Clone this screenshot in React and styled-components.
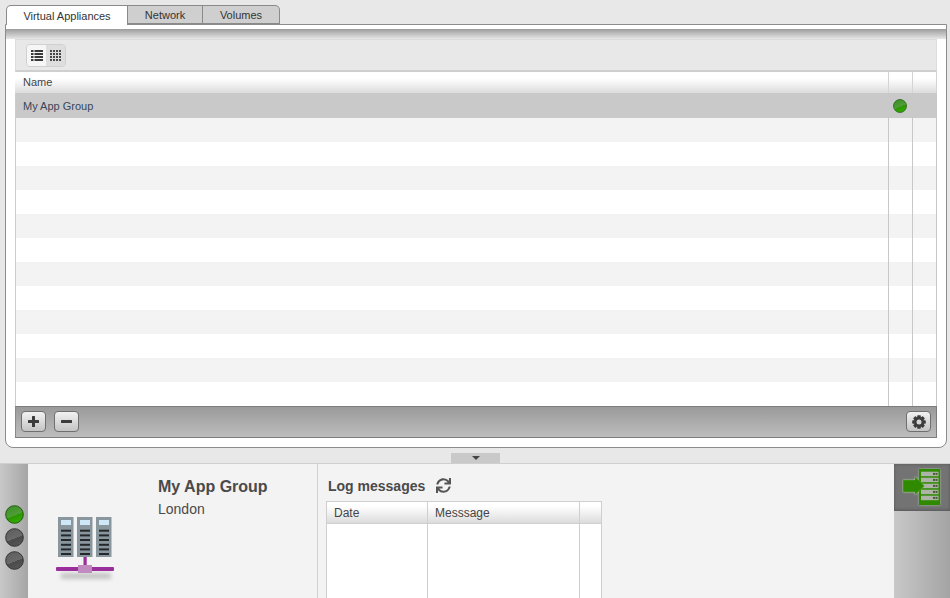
import React from "react";
import styled, { createGlobalStyle } from "styled-components";
import { FaSync } from "react-icons/fa";

const GlobalStyle = createGlobalStyle`
  html, body {
    margin: 0;
    padding: 0;
    height: 598px;
    overflow: hidden;
    background: #e8e8e8;
    font-family: "Liberation Sans", Arial, sans-serif;
  }
`;

const Page = styled.div`
  width: 950px;
  height: 598px;
  display: flex;
  flex-direction: column;
  overflow: hidden;
`;

const TopArea = styled.div`
  height: 448px;
  padding: 5px 3px 0 5px;
  box-sizing: border-box;
  display: flex;
  flex-direction: column;
  flex: none;
`;

const TabBar = styled.div`
  display: flex;
  height: 20px;
  padding-left: 1px;
  position: relative;
  z-index: 1;
  margin-bottom: -1px;
`;

const Tab = styled.div`
  box-sizing: border-box;
  width: ${(p) => p.$w}px;
  height: ${(p) => (p.$active ? 20 : 19)}px;
  display: flex;
  align-items: center;
  justify-content: center;
  font-size: 11px;
  color: #333;
  background: ${(p) => (p.$active ? "#fff" : "#cfcfcf")};
  border: 1px solid #8a8a8a;
  border-left-width: ${(p) => (p.$first ? 1 : 0)}px;
  border-bottom-width: ${(p) => (p.$active ? 0 : 1)}px;
  border-top-left-radius: ${(p) => (p.$first ? 5 : 0)}px;
  border-top-right-radius: ${(p) => (p.$last ? 5 : 0)}px;
`;

const Panel = styled.div`
  flex: 1;
  box-sizing: border-box;
  border: 1px solid #8c8c8c;
  border-radius: 0 0 8px 8px;
  background: linear-gradient(#fff 0, #fff 4px, #9c9c9c 4px, #e6e6e6 14px, #fff 14px);
  padding: 14px 9px 9px 9px;
  display: flex;
  min-height: 0;
`;

const Inner = styled.div`
  flex: 1;
  display: flex;
  flex-direction: column;
  min-width: 0;
`;

const Toolbar = styled.div`
  height: 33px;
  flex: none;
  box-sizing: border-box;
  background: #e8e8e8;
  border: 1px solid #dcdcdc;
  border-bottom: 2px solid #cfcfcf;
  padding: 4px 10px;
  display: flex;
  align-items: flex-start;
`;

const ViewSwitch = styled.div`
  display: flex;
  height: 21px;
  border: 1px solid #d0d0d0;
  border-radius: 4px;
  overflow: hidden;
`;

const ViewButton = styled.div`
  width: 19px;
  display: flex;
  align-items: center;
  justify-content: center;
  background: ${(p) => (p.$on ? "#f6f6f6" : "#dedede")};
`;

const HeaderRow = styled.div`
  display: grid;
  grid-template-columns: 1fr 24px 24px;
  height: 21px;
  flex: none;
  box-sizing: border-box;
  padding-left: 1px;
  background: linear-gradient(#fff 30%, #dcdcdc);
`;

const HeadCell = styled.div`
  font-size: 11px;
  color: #444;
  padding: 0 0 2px 7px;
  display: flex;
  align-items: center;
  box-sizing: border-box;
  border-right: 1px solid #d4d4d4;
`;

const Rows = styled.div`
  flex: 1;
  min-height: 0;
  overflow: hidden;
  background: #fff;
  border-left: 1px solid #cccccc;
`;

const Row = styled.div`
  display: grid;
  grid-template-columns: 1fr 24px 24px;
  height: ${(p) => (p.$selected ? 25 : 24)}px;
  background: ${(p) => (p.$selected ? "#c9c9c9" : p.$odd ? "#f3f3f3" : "#fff")};
`;

const Cell = styled.div`
  font-size: 11px;
  color: #3a4658;
  padding-left: 7px;
  display: flex;
  align-items: center;
  box-sizing: border-box;
  border-right: ${(p) => (p.$line ? "1px solid #c8c8c8" : "none")};
`;

const StatusCell = styled(Cell)`
  padding-left: 4px;
`;

const BottomBar = styled.div`
  height: 32px;
  flex: none;
  box-sizing: border-box;
  border: 1px solid #7d7d7d;
  border-left-color: #8a8a8a;
  background: linear-gradient(#9a9a9a, #bdbdbd);
  padding: 4px 5px 0 5px;
  display: flex;
  gap: 8px;
`;

const BarButton = styled.div`
  box-sizing: border-box;
  width: 25px;
  height: 21px;
  border: 1px solid #6f6f6f;
  border-radius: 4px;
  background: linear-gradient(#f2f2f2, #c4c4c4);
  display: flex;
  align-items: center;
  justify-content: center;
  margin-left: ${(p) => (p.$right ? "auto" : 0)};
`;

const Splitter = styled.div`
  height: 15px;
  flex: none;
  display: flex;
  justify-content: center;
  align-items: flex-end;
`;

const Handle = styled.div`
  width: 49px;
  height: 10px;
  background: #c9c9c9;
  display: flex;
  align-items: center;
  justify-content: center;
  margin-left: 1px;
`;

const Arrow = styled.div`
  width: 0;
  height: 0;
  border-left: 4px solid transparent;
  border-right: 4px solid transparent;
  border-top: 4px solid #444;
`;

const Bottom = styled.div`
  flex: 1;
  display: flex;
  border-top: 1px solid #cfcfcf;
  background: #f3f3f3;
  min-height: 0;
`;

const LeftStrip = styled.div`
  width: 28px;
  flex: none;
  background: linear-gradient(90deg, #c8c8c8, #a6a6a6);
  display: flex;
  flex-direction: column;
  align-items: flex-start;
  gap: 4px;
  padding: 41px 0 0 5px;
  box-sizing: border-box;
`;

const Summary = styled.div`
  width: 290px;
  flex: none;
  box-sizing: border-box;
  border-right: 1px solid #d0d0d0;
  display: flex;
`;

const GroupIcon = styled.div`
  width: 130px;
  flex: none;
  padding: 51px 0 0 27px;
  box-sizing: border-box;
`;

const Info = styled.div`
  padding-top: 13px;
`;

const GroupName = styled.div`
  font-size: 16px;
  font-weight: bold;
  color: #4a4a4a;
  line-height: 19px;
`;

const GroupPlace = styled.div`
  font-size: 14px;
  color: #4a4a4a;
  margin-top: 5px;
  line-height: 16px;
`;

const LogArea = styled.div`
  flex: 1;
  padding: 12px 0 0 8px;
  min-width: 0;
`;

const LogTitle = styled.div`
  display: flex;
  align-items: center;
  gap: 11px;
  height: 19px;
  margin-left: 2px;
  font-size: 14px;
  font-weight: bold;
  color: #4a4a4a;
`;

const LogTable = styled.div`
  margin-top: 6px;
  width: 276px;
  height: 120px;
  box-sizing: border-box;
  border: 1px solid #cfcfcf;
  background: #fff;
  display: grid;
  grid-template-columns: 101px 152px 1fr;
  grid-template-rows: 22px 1fr;
`;

const LogHead = styled.div`
  font-size: 12px;
  color: #444;
  padding-left: 7px;
  display: flex;
  align-items: center;
  background: linear-gradient(#fff 20%, #dcdcdc);
  border-right: ${(p) => (p.$line ? "1px solid #cfcfcf" : "none")};
  border-bottom: 1px solid #cfcfcf;
`;

const LogCell = styled.div`
  border-right: ${(p) => (p.$line ? "1px solid #cfcfcf" : "none")};
`;

const RightStrip = styled.div`
  width: 56px;
  flex: none;
  background: linear-gradient(90deg, #c8c8c8, #a4a4a4);
  display: flex;
  flex-direction: column;
`;

const DeployButton = styled.div`
  height: 47px;
  box-sizing: border-box;
  background: #737373;
  border-bottom: 1px solid #5f5f5f;
  box-shadow: inset 0 0 3px #555;
  padding: 4px 0 0 8px;
`;

const Dot = ({ color = "green", size = 14 }) => {
  const stops =
    color === "green"
      ? ["#3f8f28", "#4f9e38", "#2a9600", "#35ae04", "#1c5a0c"]
      : ["#5e5e5e", "#6a6a6a", "#4a4a4a", "#575757", "#333333"];
  const id = `dot-${color}-${size}`;
  return (
    <svg width={size} height={size} viewBox="0 0 20 20">
      <defs>
        <linearGradient id={id} x1="0.3" y1="0" x2="0.7" y2="1">
          <stop offset="0" stopColor={stops[0]} />
          <stop offset="0.55" stopColor={stops[1]} />
          <stop offset="0.55" stopColor={stops[2]} />
          <stop offset="1" stopColor={stops[3]} />
        </linearGradient>
      </defs>
      <circle cx="10" cy="10" r="9.3" fill={`url(#${id})`} stroke={stops[4]} strokeWidth="1" />
    </svg>
  );
};

const ListIcon = () => (
  <svg width="12" height="11" viewBox="0 0 12 11" fill="#3a3a3a">
    {[0, 3, 6, 9].map((y) => (
      <g key={y}>
        <rect x="0" y={y} width="2.5" height="2" />
        <rect x="3.5" y={y} width="8.5" height="2" />
      </g>
    ))}
  </svg>
);

const GridIcon = () => (
  <svg width="11" height="11" viewBox="0 0 11 11" fill="#4a4a4a">
    {[0, 3, 6, 9].map((y) =>
      [0, 3, 6, 9].map((x) => (
        <rect key={`${x}-${y}`} x={x} y={y} width="2" height="2" />
      ))
    )}
  </svg>
);

const PlusIcon = () => (
  <svg width="11" height="11" viewBox="0 0 11 11" fill="#3c3c3c">
    <rect x="4" y="0" width="3" height="11" rx="0.5" />
    <rect x="0" y="4" width="11" height="3" rx="0.5" />
  </svg>
);

const MinusIcon = () => (
  <svg width="11" height="11" viewBox="0 0 11 11" fill="#3c3c3c">
    <rect x="0" y="4" width="11" height="3" rx="0.5" />
  </svg>
);

const GearIcon = () => (
  <svg width="14" height="14" viewBox="0 0 14 14">
    <g fill="#3c3c3c">
      {[0, 45, 90, 135].map((a) => (
        <rect key={a} x="5.2" y="0.2" width="3.6" height="13.6" rx="0.8" transform={`rotate(${a} 7 7)`} />
      ))}
    </g>
    <circle cx="7" cy="7" r="4.9" fill="#3c3c3c" />
    <circle cx="7" cy="7" r="2.5" fill="#d6d6d6" />
  </svg>
);

const ServersIcon = () => (
  <svg width="62" height="70" viewBox="0 0 62 70">
    <defs>
      <filter id="shadow-blur" x="-20%" y="-100%" width="140%" height="300%">
        <feGaussianBlur stdDeviation="2" />
      </filter>
    </defs>
    <rect x="6" y="58" width="50" height="6" fill="#c4c4c4" filter="url(#shadow-blur)" />
    {[3, 22, 41].map((x) => (
      <g key={x}>
        <rect x={x} y="2" width="15.5" height="40" fill="#8a969e" />
        <rect x={x + 3} y="5" width="10" height="5" fill="#cfe8f8" />
        {[14.7, 19.4, 24, 28.8, 33.4, 38].map((y) => (
          <rect key={y} x={x + 3} y={y} width="10" height="2" fill="#24282b" />
        ))}
      </g>
    ))}
    <rect x="28.5" y="42" width="3.2" height="10" fill="#9a2e9a" />
    <rect x="1" y="52" width="58" height="4" rx="1" fill="#9a2e9a" />
    <rect x="23" y="50" width="14" height="8" fill="#c08cc0" />
  </svg>
);

const DeployIcon = () => (
  <svg width="42" height="40" viewBox="0 0 42 40">
    <defs>
      <filter id="deploy-glow" x="-10%" y="-10%" width="120%" height="120%">
        <feGaussianBlur stdDeviation="0.8" />
      </filter>
    </defs>
    <g filter="url(#deploy-glow)" fill="#b8e8a0" opacity="0.75">
      <rect x="17" y="1" width="21" height="36" />
      <path d="M1 12 H13 V8.5 L22.5 18 L13 27 V24 H1 Z" />
    </g>
    <rect x="17" y="1" width="21" height="36" fill="#2f8a00" />
    {[3.7, 9.7, 15.7, 21.7, 27.7].map((y) => (
      <g key={y}>
        <rect x="19" y={y} width="17.5" height="4.5" fill="#adb3a6" />
        <rect x="31" y={y + 1.2} width="2" height="2" fill="#4a5a3a" />
        <rect x="33.5" y={y + 1.2} width="2" height="2" fill="#4a5a3a" />
      </g>
    ))}
    <path d="M1 12 H13 V8.5 L22.5 18 L13 27 V24 H1 Z" fill="#2f8a00" stroke="#a8d890" strokeOpacity="0.5" strokeWidth="0.5" />
  </svg>
);

const ROW_COUNT = 12;

const App = () => {
  return (
    <Page>
      <GlobalStyle />
      <TopArea>
        <TabBar>
          <Tab $w={122} $first $active>Virtual Appliances</Tab>
          <Tab $w={75}>Network</Tab>
          <Tab $w={77} $last>Volumes</Tab>
        </TabBar>
        <Panel>
          <Inner>
            <Toolbar>
              <ViewSwitch>
                <ViewButton $on><ListIcon /></ViewButton>
                <ViewButton><GridIcon /></ViewButton>
              </ViewSwitch>
            </Toolbar>
            <HeaderRow>
              <HeadCell>Name</HeadCell>
              <HeadCell />
              <HeadCell />
            </HeaderRow>
            <Rows>
              <Row $selected>
                <Cell>My App Group</Cell>
                <StatusCell><Dot /></StatusCell>
                <Cell />
              </Row>
              {Array.from({ length: ROW_COUNT }).map((_, i) => (
                <Row key={i} $odd={i % 2 === 0}>
                  <Cell $line />
                  <Cell $line />
                  <Cell $line />
                </Row>
              ))}
            </Rows>
            <BottomBar>
              <BarButton><PlusIcon /></BarButton>
              <BarButton><MinusIcon /></BarButton>
              <BarButton $right><GearIcon /></BarButton>
            </BottomBar>
          </Inner>
        </Panel>
      </TopArea>
      <Splitter>
        <Handle><Arrow /></Handle>
      </Splitter>
      <Bottom>
        <LeftStrip>
          <Dot size={19} />
          <Dot size={19} color="gray" />
          <Dot size={19} color="gray" />
        </LeftStrip>
        <Summary>
          <GroupIcon><ServersIcon /></GroupIcon>
          <Info>
            <GroupName>My App Group</GroupName>
            <GroupPlace>London</GroupPlace>
          </Info>
        </Summary>
        <LogArea>
          <LogTitle>
            Log messages
            <FaSync size={15} color="#555" />
          </LogTitle>
          <LogTable>
            <LogHead $line>Date</LogHead>
            <LogHead $line>Messsage</LogHead>
            <LogHead />
            <LogCell $line />
            <LogCell $line />
            <LogCell />
          </LogTable>
        </LogArea>
        <RightStrip>
          <DeployButton><DeployIcon /></DeployButton>
        </RightStrip>
      </Bottom>
    </Page>
  );
};

export default App;
